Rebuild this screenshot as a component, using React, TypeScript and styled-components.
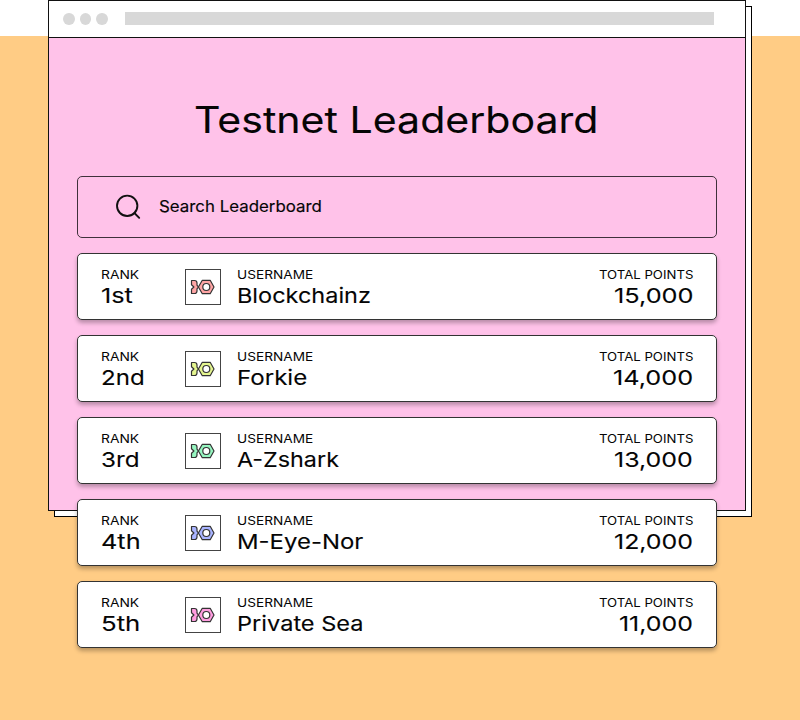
import React, { useLayoutEffect, useRef } from 'react';
import styled, { createGlobalStyle } from 'styled-components';

const GlobalStyle = createGlobalStyle`
  * { box-sizing: border-box; }
  body { margin: 0; background: #fff; }
`;

const Page = styled.main`
  width: 800px;
  height: 720px;
  padding-left: 48px;
  overflow: hidden;
  background: linear-gradient(#fff 36px, #ffcc85 36px);
  color: #050505;
  font-family: Inter, 'Liberation Sans', sans-serif;
`;

const BrowserWindow = styled.section`
  position: relative;
  z-index: 0;
  width: 698px;
  height: 511px;
  padding: 1px;

  &::before {
    content: '';
    position: absolute;
    z-index: -2;
    inset: 6px -6px -6px 6px;
    border: 1px solid #000;
    background: #fff;
  }

  &::after {
    content: '';
    position: absolute;
    z-index: -1;
    inset: 0;
    border: 1px solid #111;
    background: #ffc2e9;
  }
`;

const BrowserBar = styled.header`
  display: flex;
  align-items: center;
  height: 37px;
  padding: 0 31px 0 14px;
  gap: 5px;
  border-bottom: 1px solid #111;
  background: #fff;
`;

const Dot = styled.i`
  width: 11.5px;
  height: 12px;
  border-radius: 50%;
  background: #d8d8d8;
`;

const AddressBar = styled.div`
  flex: 1;
  height: 13px;
  margin: 0 0 1px 12.5px;
  background: #d8d8d8;
`;

const Content = styled.div`
  padding: 0 28px;
`;

const Title = styled.h1`
  display: flex;
  justify-content: center;
  height: 48px;
  margin: 58px 1px 32px 0;
  font-size: 36.5px;
  font-weight: 400;
  line-height: 48px;
  -webkit-text-stroke: 0.1px #050505;
`;

const SearchBox = styled.div`
  display: flex;
  align-items: center;
  height: 62px;
  padding-left: 37px;
  border: 1px solid #40303b;
  border-radius: 5px;
  font-size: 16.5px;
  line-height: 24px;
  -webkit-text-stroke: 0.15px #050505;
`;

const SearchIcon = styled.svg`
  width: 28px;
  height: 28px;
  margin-right: 16px;
`;

const SearchText = styled.div`
  padding-bottom: 3px;
`;

const Entries = styled.ol`
  display: grid;
  grid-auto-rows: 67px;
  gap: 15px;
  margin: 15px 0 0;
  padding: 0;
  list-style: none;
`;

const Entry = styled.li`
  display: grid;
  grid-template-columns: 84px 52px 1fr auto;
  align-items: start;
  padding: 15px 23px 0;
  border: 1px solid #333;
  border-radius: 5px;
  background: #fff;
  box-shadow: 0 3px 4px rgba(0, 0, 0, 0.28);
`;

const Field = styled.div<{ $end?: boolean }>`
  display: flex;
  flex-direction: column;
  align-items: ${({ $end }) => ($end ? 'flex-end' : 'flex-start')};
  padding-top: 1px;
`;

const Label = styled.div`
  height: 11px;
  font-size: 11.5px;
  line-height: 11px;
`;

const Value = styled.div`
  height: 30px;
  font-size: 20.5px;
  line-height: 30px;
  -webkit-text-stroke: 0.1px #050505;
`;

const Avatar = styled.svg`
  width: 36px;
  height: 36px;
`;

const Slot = styled.span<{ $width: number }>`
  display: block;
  width: ${({ $width }) => $width}px;
  white-space: nowrap;
`;

const Glyphs = styled.span`
  display: inline-block;
  transform-origin: left center;
`;

function WideText({ width, children }: { width: number; children: string }) {
  const ref = useRef<HTMLSpanElement>(null);
  useLayoutEffect(() => {
    const el = ref.current;
    if (el) el.style.transform = `scaleX(${width / el.offsetWidth})`;
  }, [width, children]);
  return (
    <Slot $width={width}>
      <Glyphs ref={ref}>{children}</Glyphs>
    </Slot>
  );
}

function Fish({ color }: { color: string }) {
  return (
    <Avatar viewBox="0 0 36 36" aria-hidden="true">
      <rect x="0.5" y="0.5" width="35" height="35" fill="#fff" stroke="#444" />
      <g fill={color} stroke="#333" strokeWidth="1.2" strokeLinejoin="round">
        <path d="M6.5 11.5H9.5Q12 11.5 12 14V16.2L13.4 18L12 19.8V22Q12 24.5 9.5 24.5H6.5V20.3L8.9 18L6.5 15.7Z" />
        <path d="M13.4 18L17.3 11.3H25.2L29 18L25.2 24.7H17.3Z" />
        <circle cx="21.3" cy="18" r="3.5" fill="#fff" />
      </g>
    </Avatar>
  );
}

const entries = [
  { rank: '1st', rankW: 32, name: 'Blockchainz', nameW: 134, points: '15,000', pointsW: 79, color: '#ffa5a5' },
  { rank: '2nd', rankW: 43.5, name: 'Forkie', nameW: 70.5, points: '14,000', pointsW: 80, color: '#e4f58f' },
  { rank: '3rd', rankW: 39, name: 'A-Zshark', nameW: 102.5, points: '13,000', pointsW: 79, color: '#96f5c0' },
  { rank: '4th', rankW: 39.5, name: 'M-Eye-Nor', nameW: 126, points: '12,000', pointsW: 79, color: '#a9b4ff' },
  { rank: '5th', rankW: 39, name: 'Private Sea', nameW: 126.5, points: '11,000', pointsW: 74, color: '#ff9de0' },
];

export default function App() {
  return (
    <>
      <GlobalStyle />
      <Page>
        <BrowserWindow>
          <BrowserBar>
            <Dot />
            <Dot />
            <Dot />
            <AddressBar />
          </BrowserBar>
          <Content>
            <Title>
              <WideText width={405}>Testnet Leaderboard</WideText>
            </Title>
            <SearchBox>
              <SearchIcon viewBox="0 0 28 28" fill="none" stroke="#111" strokeWidth="1.9" strokeLinecap="round" aria-hidden="true">
                <circle cx="12.2" cy="12.8" r="10.2" />
                <path d="M19.4 20L24.2 24.8" />
              </SearchIcon>
              <SearchText>
                <WideText width={162.5}>Search Leaderboard</WideText>
              </SearchText>
            </SearchBox>
            <Entries>
              {entries.map((e) => (
                <Entry key={e.rank}>
                  <Field>
                    <Label><WideText width={38.5}>RANK</WideText></Label>
                    <Value><WideText width={e.rankW}>{e.rank}</WideText></Value>
                  </Field>
                  <Fish color={e.color} />
                  <Field>
                    <Label><WideText width={76}>USERNAME</WideText></Label>
                    <Value><WideText width={e.nameW}>{e.name}</WideText></Value>
                  </Field>
                  <Field $end>
                    <Label><WideText width={94}>TOTAL POINTS</WideText></Label>
                    <Value><WideText width={e.pointsW}>{e.points}</WideText></Value>
                  </Field>
                </Entry>
              ))}
            </Entries>
          </Content>
        </BrowserWindow>
      </Page>
    </>
  );
}
